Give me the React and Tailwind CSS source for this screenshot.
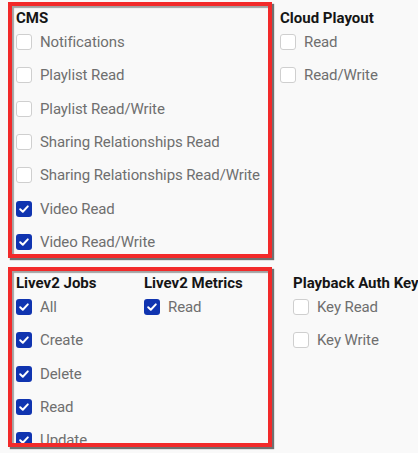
import React from 'react'

const CMS = [
  { label: 'Notifications', on: false },
  { label: 'Playlist Read', on: false },
  { label: 'Playlist Read/Write', on: false },
  { label: 'Sharing Relationships Read', on: false },
  { label: 'Sharing Relationships Read/Write', on: false },
  { label: 'Video Read', on: true },
  { label: 'Video Read/Write', on: true },
]

const CLOUD = [
  { label: 'Read', on: false },
  { label: 'Read/Write', on: false },
]

const JOBS = [
  { label: 'All', on: true },
  { label: 'Create', on: true },
  { label: 'Delete', on: true },
  { label: 'Read', on: true },
  { label: 'Update', on: true },
]

const METRICS = [{ label: 'Read', on: true }]

const AUTH = [
  { label: 'Key Read', on: false },
  { label: 'Key Write', on: false },
]

function Box({ on }) {
  if (on) {
    return (
      <span className="w-4 h-4 shrink-0 rounded-[3px] bg-[#1034b0] flex items-center justify-center">
        <svg width="12" height="12" viewBox="0 0 12 12" fill="none">
          <path d="M2.2 6.3 L4.8 8.8 L9.8 3.4" stroke="#fff" strokeWidth="2" strokeLinecap="round" strokeLinejoin="round" />
        </svg>
      </span>
    )
  }
  return <span className="w-4 h-4 shrink-0 rounded-[3px] bg-white border border-[#cfcfcf]" />
}

function Group({ title, items, className = '' }) {
  return (
    <div className={className}>
      <div className="h-5 leading-5 text-[15px] font-bold text-[#151515] whitespace-nowrap">{title}</div>
      <div className="mt-1.5 flex flex-col gap-[17.33px]">
        {items.map(it => (
          <label key={it.label} className="h-4 flex items-center gap-2 whitespace-nowrap">
            <Box on={it.on} />
            <span className="text-[15px] leading-4 tracking-[-0.1px] text-[#6f6f6f]">{it.label}</span>
          </label>
        ))}
      </div>
    </div>
  )
}

export default function App() {
  return (
    <div className="min-h-screen bg-[#f9f9f9] pt-[2px] pl-2 overflow-hidden" style={{ fontFamily: 'Roboto, "Liberation Sans", sans-serif' }}>
      <div className="flex">
        <div className="w-[264px] h-[256px] shrink-0 border-4 border-[#f22a2a] shadow-[2px_2px_1px_rgba(0,0,0,0.55),inset_2px_2px_1px_rgba(0,0,0,0.35)] pt-[2px] pl-1 overflow-hidden">
          <Group title="CMS" items={CMS} />
        </div>
        <Group title="Cloud Playout" items={CLOUD} className="ml-2 pt-[6px]" />
      </div>

      <div className="flex mt-[9px]">
        <div className="w-[264px] h-[180px] shrink-0 border-4 border-[#f22a2a] shadow-[2px_2px_1px_rgba(0,0,0,0.55),inset_2px_2px_1px_rgba(0,0,0,0.35)] pt-[2px] pl-1 overflow-hidden flex">
          <Group title="Livev2 Jobs" items={JOBS} className="w-[128px] shrink-0" />
          <Group title="Livev2 Metrics" items={METRICS} />
        </div>
        <Group title="Playback Auth Key" items={AUTH} className="ml-[21px] pt-[6px]" />
      </div>
    </div>
  )
}
